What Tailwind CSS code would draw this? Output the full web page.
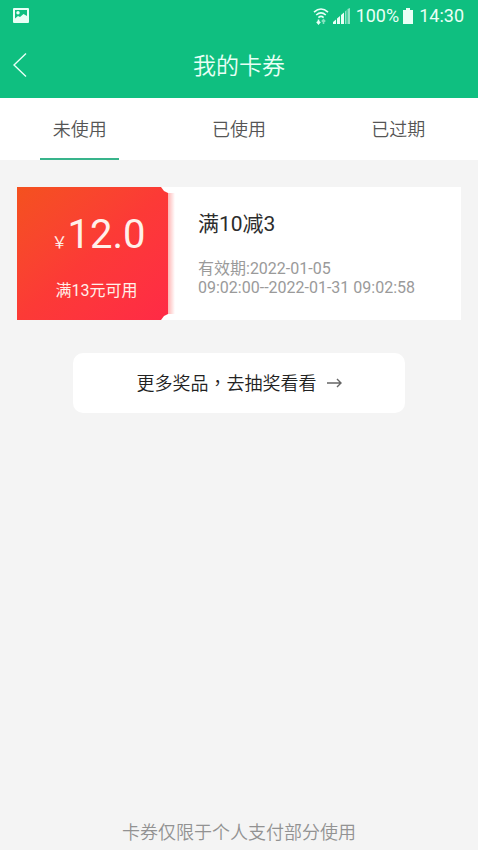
<!DOCTYPE html>
<html lang="zh-CN">
<head>
<meta charset="utf-8">
<meta name="viewport" content="width=device-width, initial-scale=1">
<title>我的卡券</title>
<script src="https://cdn.jsdelivr.net/npm/@tailwindcss/browser@4"></script>
</head>
<body class="flex min-h-screen flex-col bg-[#f4f4f4] font-['Roboto','Noto_Sans_CJK_SC',sans-serif]">
  <header class="bg-[#0fbf80] text-[#e9fff6]">
    <div class="flex h-8 items-center justify-between pl-[13px] pr-[14px]">
      <svg class="h-4 w-4" viewBox="0 0 16 16" aria-hidden="true">
        <path fill="currentColor" fill-rule="evenodd" d="M1 0h14q1 0 1 1v13q0 1-1 1H1q-1 0-1-1V1q0-1 1-1zM2 2v8.500l3-2.500 2 1 3.500-3 3.500 2V2z"/>
        <circle cx="5" cy="4.800" r="1.700" fill="currentColor"/>
      </svg>
      <div class="flex items-center text-lg">
        <svg class="mr-1 h-[18px] w-4" viewBox="0 0 16 18" fill="none" stroke="currentColor" stroke-width="1.600" aria-hidden="true">
          <path d="M1 5.200Q8-1.200 15 5.200M3.200 8Q8 3.600 12.800 8M5.400 10.600Q8 8.200 10.600 10.600"/>
          <path d="M5.500 12.500v4M3.800 14.800l1.700 1.900 1.700-1.900"/>
          <path opacity=".55" d="M10.500 17v-4M8.800 14.600l1.700-1.900 1.700 1.900"/>
        </svg>
        <svg class="mr-[6px] h-4 w-[17px]" viewBox="0 0 17 16" fill="currentColor" aria-hidden="true">
          <path d="M0 16v-2l3-2.500V16zM4 16v-5.500L7 8v8zM8 16V7l3-2.500V16z"/>
          <path opacity=".6" d="M12 16V3.500L13.500 2v14zM14.500 16V1L17 0v16z"/>
        </svg>
        <span>100%</span>
        <svg class="ml-1 mr-[6px] h-4 w-[10px]" viewBox="0 0 10 16" fill="currentColor" aria-hidden="true"><path d="M3 0h4v2h3v14H0V2h3z"/></svg>
        <span>14:30</span>
      </div>
    </div>
    <div class="grid h-[66px] grid-cols-[48px_1fr_48px] items-center">
      <button type="button" aria-label="返回" class="flex h-full items-center pl-[13px]">
        <svg class="h-[26px] w-[14px]" viewBox="0 0 14 26" fill="none" stroke="currentColor" stroke-width="1.400" aria-hidden="true"><path d="M13 1.500L1 13l12 11.500"/></svg>
      </button>
      <h1 class="pt-1 text-center text-[23px] font-[350]">我的卡券</h1>
    </div>
  </header>

  <nav class="grid h-[62px] grid-cols-3 bg-white text-lg font-[350] text-[#555]">
    <a href="#unused" aria-current="page" class="flex flex-col items-center">
      <span class="flex flex-1 items-center pt-1">未使用</span>
      <span class="h-[2px] w-1/2 bg-[#38b48b]"></span>
    </a>
    <a href="#used" class="flex items-center justify-center pt-[2px]">已使用</a>
    <a href="#expired" class="flex items-center justify-center pt-[2px]">已过期</a>
  </nav>

  <main class="flex flex-1 flex-col px-[17px] pt-[27px]">
    <article class="flex bg-white">
      <div class="flex bg-[#f4f4f4]">
        <div class="w-[151px] bg-linear-to-br from-[#f4511e] via-[#fc3a36] to-[#ff2a46] pb-[17px] pt-6 text-center text-[#fff0ea] [clip-path:polygon(0_0,144px_0,147px_4px,151px_6px,151px_127px,147px_129px,144px_100%,0_100%)]">
          <p class="pl-3 text-[40px] leading-[48px]"><span class="text-base">￥</span>12.0</p>
          <p class="mt-5 pl-2 text-base leading-6">满13元可用</p>
        </div>
        <div class="-ml-[7px] w-[14px] bg-white"></div>
      </div>
      <div class="-ml-[7px] my-[6px] w-[7px] bg-linear-to-r from-[#ffb4b4] to-white"></div>
      <div class="flex-1 pl-[23px] pt-[23px]">
        <h2 class="text-[21px] leading-7 text-[#2c2c2c]">满10减3</h2>
        <p class="mt-[21px] text-base leading-[19px] text-[#9a9a9a]">有效期:2022-01-05<br>09:02:00--2022-01-31 09:02:58</p>
      </div>
    </article>

    <a href="#lottery" class="mx-14 mt-[33px] flex h-[60px] items-center justify-center gap-[10px] rounded-[10px] bg-white text-lg font-[350] text-[#222]">
      <span>更多奖品<span class="font-['Noto_Sans_CJK_TC',sans-serif]" lang="zh-TW">，</span>去抽奖看看</span>
      <svg class="h-[10px] w-[15px]" viewBox="0 0 15 10" fill="none" stroke="#666" stroke-width="1.400" aria-hidden="true"><path d="M0 5h14M10 1l4 4-4 4"/></svg>
    </a>
  </main>

  <footer class="pb-1 text-center text-lg font-[350] leading-[26px] text-[#929292]">卡券仅限于个人支付部分使用</footer>
</body>
</html>
